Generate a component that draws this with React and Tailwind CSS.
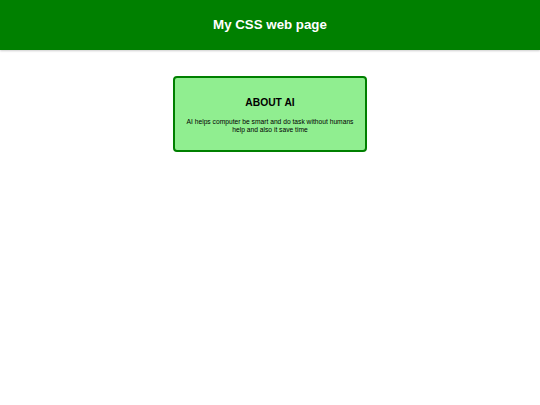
export default function App() {
    return (
        <div className="min-h-screen bg-white font-['Liberation_Sans',Arial,sans-serif]">
            {/* Header */}
            <header className="bg-[#008000] h-[50px] flex items-center justify-center shadow-[0_1px_2px_rgba(0,0,0,0.2)]">
                <h1 className="text-white font-bold text-[13.3px]">My CSS web page</h1>
            </header>

            {/* Card */}
            <main className="flex justify-center pt-[26px]">
                <div className="w-[194px] h-[76px] bg-[#90ee90] border-2 border-[#008000] rounded-[4px] flex flex-col items-center justify-center px-[6px] text-center text-black">
                    <h2 className="font-bold text-[10.3px] leading-none mb-[9px] mt-[4px]">ABOUT AI</h2>
                    <p className="text-[6.7px] leading-[8px]">
                        AI helps computer be smart and do task without humans help and also it save time
                    </p>
                </div>
            </main>
        </div>
    );
}
